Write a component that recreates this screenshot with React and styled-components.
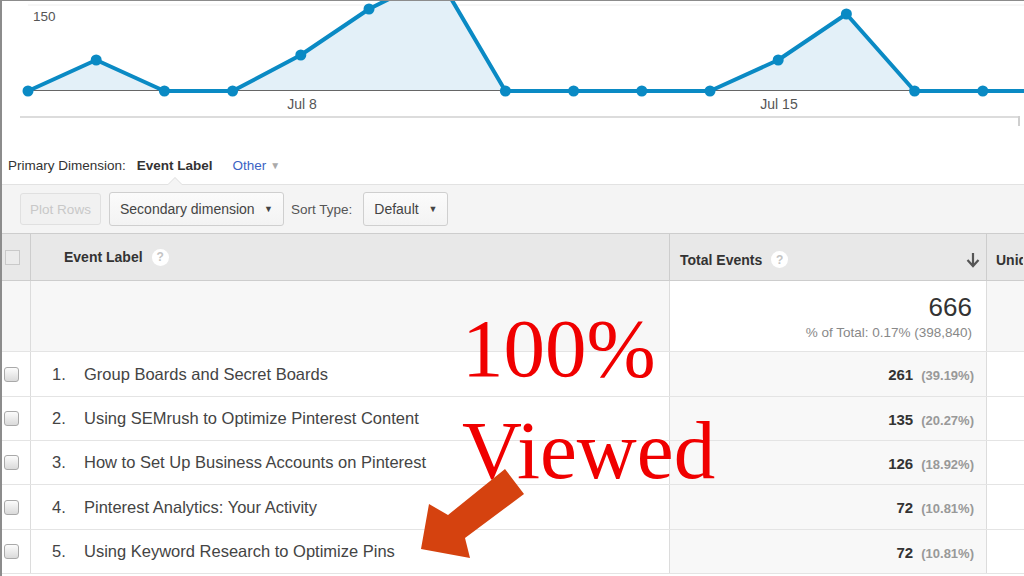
import styled, { createGlobalStyle } from "styled-components";

const GlobalStyle = createGlobalStyle`
  html, body {
    margin: 0;
    padding: 0;
    background: #fff;
  }
  body {
    font-family: "Liberation Sans", Arial, sans-serif;
    color: #333;
  }
`;

const Frame = styled.div`
  position: relative;
  width: 1024px;
  height: 576px;
  overflow: hidden;
  box-sizing: border-box;
  border-top: 1px solid #8c8c8c;
  border-left: 2px solid #8c8c8c;
  background: #fff;
`;

const ChartSvg = styled.svg`
  display: block;
  width: 1022px;
  height: 139px;
`;

const DimensionRow = styled.div`
  display: flex;
  align-items: center;
  height: 44px;
  box-sizing: border-box;
  padding: 6px 0 0 6px;
  font-size: 13.5px;
  color: #333;
`;

const DimItem = styled.span`
  margin-left: ${(p) => p.$gap || 0}px;
  color: ${(p) => (p.$link ? "#3b63c4" : "#333")};
  font-weight: ${(p) => (p.$active ? 700 : 400)};
  align-self: stretch;
  display: flex;
  align-items: center;
  position: relative;
  z-index: 2;

  ${(p) =>
    p.$active &&
    `
    &::before, &::after {
      content: "";
      position: absolute;
      left: 50%;
      transform: translateX(-50%);
      width: 0;
      height: 0;
      border-left: 7px solid transparent;
      border-right: 7px solid transparent;
    }
    &::before {
      bottom: 0;
      border-bottom: 7px solid #dedede;
    }
    &::after {
      bottom: -1px;
      border-bottom: 7px solid #f4f4f4;
    }
  `}
`;

const Caret = styled.span`
  margin-left: 4px;
  font-size: ${(p) => p.$size || 10}px;
  color: ${(p) => p.$color || "#aaa"};
`;

const Toolbar = styled.div`
  display: flex;
  align-items: center;
  height: 49px;
  box-sizing: border-box;
  padding-left: 18px;
  background: #f4f4f4;
  border-top: 1px solid #e2e2e2;
`;

const Button = styled.div`
  display: flex;
  align-items: center;
  justify-content: ${(p) => (p.$disabled ? "center" : "space-between")};
  box-sizing: border-box;
  height: ${(p) => (p.$disabled ? 32 : 34)}px;
  width: ${(p) => p.$w}px;
  margin-right: ${(p) => p.$mr || 0}px;
  padding: 0 ${(p) => (p.$disabled ? 0 : 10)}px;
  border: 1px solid ${(p) => (p.$disabled ? "#e0e0e0" : "#cfcfcf")};
  border-radius: 3px;
  background: ${(p) =>
    p.$disabled ? "#f1f1f1" : "linear-gradient(#fbfbfb, #f3f3f3)"};
  color: ${(p) => (p.$disabled ? "#c8c8c8" : "#444")};
  font-size: ${(p) => (p.$disabled ? 13.5 : 14)}px;
  white-space: nowrap;
`;

const ToolLabel = styled.span`
  font-size: 13.5px;
  color: #555;
  margin-right: 11px;
`;

const Row = styled.div`
  display: grid;
  grid-template-columns: 29px 639px 317px 1fr;
  height: ${(p) => p.$h}px;
  box-sizing: border-box;
  background: ${(p) => p.$bg || "#fff"};
  border-top: ${(p) => (p.$top ? "1px solid #cdcdcd" : "none")};
  border-bottom: 1px solid ${(p) => p.$line || "#e4e4e4"};
`;

const Cell = styled.div`
  display: flex;
  align-items: ${(p) => p.$align || "center"};
  justify-content: ${(p) => p.$justify || "flex-start"};
  box-sizing: border-box;
  padding: ${(p) => p.$pad || "0"};
  background: ${(p) => p.$bg || "transparent"};
  border-right: 1px solid ${(p) => (p.$last ? "transparent" : p.$line || "#dcdcdc")};
  overflow: hidden;
  white-space: nowrap;
`;

const HeadText = styled.span`
  font-size: 14px;
  font-weight: 700;
  color: #333;
`;

const Help = styled.span`
  display: inline-flex;
  align-items: center;
  justify-content: center;
  width: 17px;
  height: 17px;
  margin-left: 9px;
  border-radius: 50%;
  background: #fff;
  color: #c4c4c4;
  font-size: 12px;
  font-weight: 700;
`;

const HeadBox = styled.span`
  width: 15px;
  height: 15px;
  box-sizing: border-box;
  border: 1px solid #c9c9c9;
  background: #ebebeb;
  margin-left: 3px;
`;

const Check = styled.span`
  width: 15px;
  height: 15px;
  box-sizing: border-box;
  margin-left: 2px;
  border: 1px solid #a9a9a9;
  border-radius: 3px;
  background: linear-gradient(#fcfcfc, #dadada);
`;

const SortArrow = styled.svg`
  margin-left: auto;
  width: 14px;
  height: 16px;
`;

const TotalBlock = styled.div`
  display: flex;
  flex-direction: column;
  align-items: flex-end;
`;

const BigNum = styled.span`
  font-size: 26px;
  color: #333;
  line-height: 28px;
`;

const SubNote = styled.span`
  font-size: 13.5px;
  color: #888;
  margin-top: 4px;
`;

const Num = styled.span`
  width: 32px;
  font-size: 16.5px;
  color: #444;
`;

const Label = styled.span`
  font-size: 16.5px;
  color: #444;
`;

const Value = styled.span`
  font-size: 15px;
  font-weight: 700;
  color: #333;
`;

const Pct = styled.span`
  margin-left: 8px;
  font-size: 13px;
  font-weight: 700;
  color: #999;
`;

const Annotation = styled.div`
  position: absolute;
  left: 460px;
  top: 296px;
  font-family: "Liberation Serif", "Times New Roman", serif;
  font-size: 83px;
  line-height: 102px;
  color: #f00000;
  white-space: pre;
  pointer-events: none;
  z-index: 5;
`;

const ArrowSvg = styled.svg`
  position: absolute;
  left: 406px;
  top: 456px;
  width: 130px;
  height: 110px;
  z-index: 6;
`;

const STEP = 68.2;
const values = [91, 60, 91, 91, 55, 9, -25, 91, 91, 91, 91, 60, 14, 91, 91, 91];
const points = values.map((y, i) => [28 + STEP * i, y]);

const rows = [
  { label: "Group Boards and Secret Boards", total: 261, pct: "39.19%", h: 45 },
  { label: "Using SEMrush to Optimize Pinterest Content", total: 135, pct: "20.27%", h: 44 },
  { label: "How to Set Up Business Accounts on Pinterest", total: 126, pct: "18.92%", h: 44 },
  { label: "Pinterest Analytics: Your Activity", total: 72, pct: "10.81%", h: 45 },
  { label: "Using Keyword Research to Optimize Pins", total: 72, pct: "10.81%", h: 44 },
];

const Chart = () => {
  const line = points.map((p) => p.join(",")).join(" ");
  const last = points[points.length - 1];
  const area = `${line} ${last[0]},91 28,91`;
  return (
    <ChartSvg viewBox="2 1 1022 139">
      <line x1="28" y1="5" x2="1024" y2="5" stroke="#eeeeee" strokeWidth="1" />
      <text x="33" y="21" fontSize="13.5" fill="#555" fontFamily="Liberation Sans, Arial, sans-serif">150</text>
      <polygon points={area} fill="#e3f0f8" />
      <line x1="28" y1="90.5" x2="1024" y2="90.5" stroke="#666" strokeWidth="1" />
      <polyline points={line} fill="none" stroke="#0a8ac4" strokeWidth="4" strokeLinejoin="round" />
      {points.map(([x, y], i) => (
        <circle key={i} cx={x} cy={y} r="5.5" fill="#0a8ac4" />
      ))}
      <text x="302" y="109" fontSize="14" fill="#555" textAnchor="middle" fontFamily="Liberation Sans, Arial, sans-serif">Jul 8</text>
      <text x="779" y="109" fontSize="14" fill="#555" textAnchor="middle" fontFamily="Liberation Sans, Arial, sans-serif">Jul 15</text>
      <line x1="20" y1="117" x2="1019" y2="117" stroke="#dcdcdc" strokeWidth="2" />
      <line x1="1019" y1="116" x2="1019" y2="126" stroke="#cfcfcf" strokeWidth="2" />
    </ChartSvg>
  );
};

const App = () => {
  return (
    <>
      <GlobalStyle />
      <Frame>
        <Chart />

        <DimensionRow>
          <DimItem>Primary Dimension:</DimItem>
          <DimItem $gap={11} $active>Event Label</DimItem>
          <DimItem $gap={20} $link>
            Other<Caret>▼</Caret>
          </DimItem>
        </DimensionRow>

        <Toolbar>
          <Button $disabled $w={81} $mr={8}>Plot Rows</Button>
          <Button $w={175} $mr={7}>
            Secondary dimension<Caret $color="#444" $size={9}>▼</Caret>
          </Button>
          <ToolLabel>Sort Type:</ToolLabel>
          <Button $w={85}>
            Default<Caret $color="#444" $size={9}>▼</Caret>
          </Button>
        </Toolbar>

        <Row $h={48} $bg="#e8e8e8" $top $line="#cdcdcd">
          <Cell $line="#cdcdcd">
            <HeadBox />
          </Cell>
          <Cell $line="#cdcdcd" $pad="0 0 0 33px">
            <HeadText>Event Label</HeadText>
            <Help>?</Help>
          </Cell>
          <Cell $line="#cdcdcd" $pad="5px 6px 0 10px">
            <HeadText>Total Events</HeadText>
            <Help>?</Help>
            <SortArrow viewBox="0 0 14 16">
              <path d="M7 1v12M1.5 8l5.5 6 5.5-6" fill="none" stroke="#555" strokeWidth="2.2" />
            </SortArrow>
          </Cell>
          <Cell $last $pad="5px 0 0 9px">
            <HeadText>Uniq</HeadText>
          </Cell>
        </Row>

        <Row $h={71} $bg="#f7f7f7">
          <Cell />
          <Cell />
          <Cell $bg="#fff" $justify="flex-end" $pad="0 14px 0 0">
            <TotalBlock>
              <BigNum>666</BigNum>
              <SubNote>% of Total: 0.17% (398,840)</SubNote>
            </TotalBlock>
          </Cell>
          <Cell $last />
        </Row>

        {rows.map((r, i) => (
          <Row key={i} $h={r.h}>
            <Cell>
              <Check />
            </Cell>
            <Cell $pad="0 0 0 21px">
              <Num>{i + 1}.</Num>
              <Label>{r.label}</Label>
            </Cell>
            <Cell $bg="#f8f8f8" $justify="flex-end" $align="baseline" $pad="14px 12px 0 0">
              <Value>{r.total}</Value>
              <Pct>({r.pct})</Pct>
            </Cell>
            <Cell $last />
          </Row>
        ))}

        <Annotation>{"100%\nViewed"}</Annotation>
        <ArrowSvg viewBox="406 456 130 110">
          <polygon
            points="503,468 522,493 463,537 468,557 419,548 427,503 446,514"
            fill="#d5420f"
          />
        </ArrowSvg>
      </Frame>
    </>
  );
};

export default App;
